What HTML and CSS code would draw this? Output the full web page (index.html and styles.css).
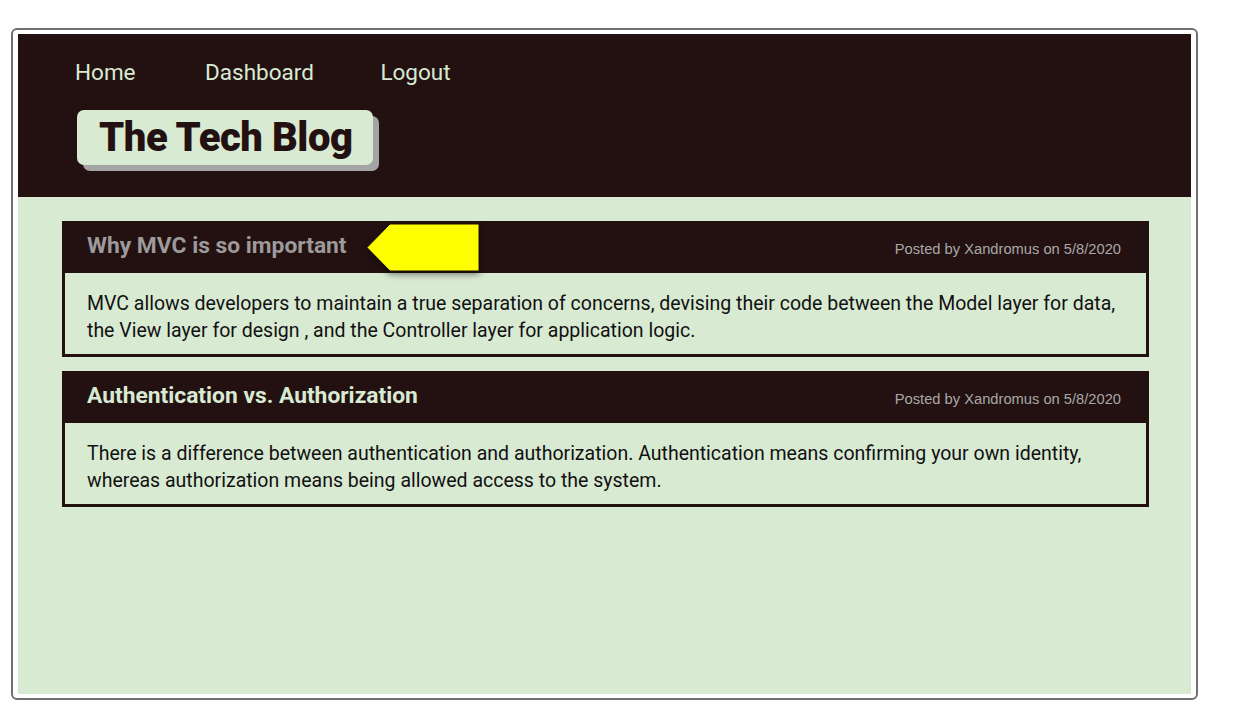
FILE: index.html
```html
<!DOCTYPE html>
<html>
<head>
<meta charset="utf-8">
<link rel="stylesheet" href="styles.css">
</head>
<body>
<div class="frame">
  <div class="page">
    <header class="site-header">
      <nav class="nav">
        <a href="#">Home</a>
        <a href="#">Dashboard</a>
        <a href="#">Logout</a>
      </nav>
      <div class="logo"><h1>The Tech Blog</h1></div>
    </header>
    <main class="posts">
      <article class="post">
        <div class="post-head">
          <h2 class="post-title muted">Why MVC is so important</h2>
          <span class="post-meta">Posted by Xandromus on 5/8/2020</span>
          <svg class="pointer" width="116" height="52" viewBox="0 0 116 52">
            <polygon points="24,1 113,1 113,48 24,48 1,24.5" fill="#ffff00" stroke="#1a0f0f" stroke-width="1"/>
          </svg>
        </div>
        <div class="post-body">
          MVC allows developers to maintain a true separation of concerns, devising their code between the Model layer for data, the View layer for design , and the Controller layer for application logic.
        </div>
      </article>
      <article class="post">
        <div class="post-head">
          <h2 class="post-title">Authentication vs. Authorization</h2>
          <span class="post-meta">Posted by Xandromus on 5/8/2020</span>
        </div>
        <div class="post-body">
          There is a difference between authentication and authorization. Authentication means confirming your own identity, whereas authorization means being allowed access to the system.
        </div>
      </article>
    </main>
  </div>
</div>
</body>
</html>
```
FILE: styles.css
```css
* { box-sizing: border-box; }
html, body { margin: 0; padding: 0; background: #ffffff; }
body { font-family: Roboto, "Liberation Sans", sans-serif; }

.frame {
  margin: 28px 0 0 11px;
  width: 1187px;
  height: 672px;
  border: 2px solid #707070;
  border-radius: 6px;
  padding: 4px 5px 4px 5px;
  background: #ffffff;
}
.page {
  height: 100%;
  background: #d9ead3;
  display: flex;
  flex-direction: column;
}
.site-header {
  background: #231111;
  height: 163px;
  padding: 23px 0 0 57px;
  display: flex;
  flex-direction: column;
  align-items: flex-start;
}
.nav {
  display: flex;
}
.nav a {
  color: #d9ead3;
  text-decoration: none;
  font-size: 22.5px;
  line-height: 30px;
  margin-right: 69.5px;
}
.nav a:nth-child(2) { margin-right: 66.5px; }
.logo {
  margin: 23px 0 0 2px;
  background: #d9ead3;
  border-radius: 7px;
  width: 296px;
  height: 55px;
  box-shadow: 6px 6px 0 #a4a4a4;
  display: flex;
  align-items: center;
  padding-left: 22px;
}
.logo h1 {
  margin: 0;
  font-size: 40px;
  font-weight: 900;
  color: #231111;
  letter-spacing: -0.45px;
  line-height: 1;
}
.posts {
  padding: 24px 42px 0 44px;
  display: flex;
  flex-direction: column;
  gap: 14px;
}
.post {
  display: flex;
  flex-direction: column;
}
.post-head {
  position: relative;
  background: #231111;
  height: 52px;
  display: flex;
  align-items: center;
  justify-content: space-between;
  padding: 0 28px 0 25px;
}
.post-title {
  margin: 0;
  font-size: 22.8px;
  font-weight: 700;
  color: #d9ead3;
  position: relative;
  top: -2px;
}
.post-title.muted { color: #9c9a9a; }
.post-meta {
  font-family: "Liberation Sans", Arial, sans-serif;
  font-size: 14.7px;
  color: #a8a8a8;
  position: relative;
  top: 2px;
}
.pointer {
  position: absolute;
  left: 304px;
  top: 2px;
  filter: drop-shadow(0 3px 3px rgba(0,0,0,0.45));
}
.post-body {
  border: 3px solid #231111;
  border-top: none;
  padding: 17px 24px 10px 22px;
  font-size: 19.5px;
  line-height: 27px;
  color: #111;
}
```
